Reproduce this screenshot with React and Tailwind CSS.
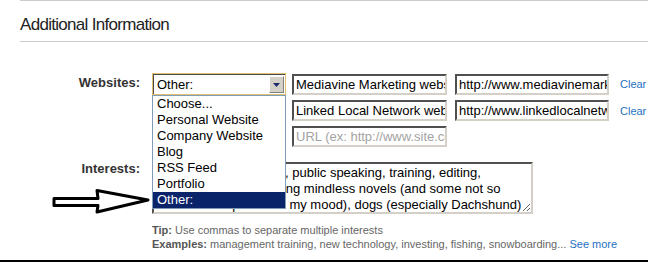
import { useState } from "react"

const websiteTypes = ['Choose...', 'Personal Website', 'Company Website', 'Blog', 'RSS Feed', 'Portfolio', 'Other:']

const websites = [
    { title: 'Mediavine Marketing website', url: 'http://www.mediavinemarketing.com' },
    { title: 'Linked Local Network website', url: 'http://www.linkedlocalnetwork.com' },
]

const interests = "Blogging, social media, public speaking, training, editing,\nsales, marketing, reading mindless novels (and some not so\nmindless - depends on my mood), dogs (especially Dachshund)"

const inset = "border-2 border-t-[#505050] border-l-[#505050] border-r-[#d4d0c8] border-b-[#d4d0c8]"

function TextBox({ value, placeholder, className }) {
    return (
        <input
            readOnly
            value={value}
            placeholder={placeholder}
            className={`${inset} ${className} block shrink-0 h-[21px] pl-[2px] pr-0 py-0 text-[13px] text-black placeholder:text-[#a3a3a3] bg-white outline-none font-['Liberation_Sans',Arial,sans-serif]`}
        />
    )
}

function TypeSelect({ open }) {
    const selected = 'Other:'
    return (
        <div className="relative w-[134px] h-[22px] shrink-0">
            <div className="h-full border border-[#e3c06f] bg-white">
                <div className="h-full flex items-center border-t border-l border-[#4a4a4a] pl-[3px]">
                    <span className="flex-1 text-[13px] text-black leading-[16px]">{selected}</span>
                    <div className="w-[15px] h-[17px] mr-[1px] bg-[#d4d0c8] border border-t-white border-l-white border-r-[#808080] border-b-[#808080] flex items-center justify-center">
                        <svg width="7" height="4" viewBox="0 0 7 4"><path d="M0 0h7L3.5 4z" fill="#1d2a6e" /></svg>
                    </div>
                </div>
            </div>
            {open && (
                <ul className="absolute left-0 top-full w-[134px] bg-white border border-[#7f9db9] z-10">
                    {websiteTypes.map(t => (
                        <li
                            key={t}
                            className={`h-[16px] leading-[16px] pl-[4px] text-[13px] ${t === selected ? 'bg-[#0a246a] text-white' : 'text-black'}`}
                        >
                            {t}
                        </li>
                    ))}
                </ul>
            )}
        </div>
    )
}

export default function App() {
    const [open] = useState(true)

    return (
        <div className="relative w-[648px] h-[262px] bg-white overflow-hidden flex flex-col font-['Liberation_Sans',Arial,sans-serif]">
            <div className="ml-5 border-t border-b border-[#cccccc] pt-[14px] pb-[6px]">
                <h2 className="text-[17px] leading-[20px] tracking-[-0.7px] text-[#222]">Additional Information</h2>
            </div>

            <div className="grid grid-cols-[140px_1fr] gap-x-3 mt-[31px]">
                <div className="text-right text-[13px] leading-[16px] font-bold text-[#333] pt-[2px]">Websites:</div>
                <div className="flex flex-col gap-[5px]">
                    <div className="flex items-start h-[22px]">
                        <TypeSelect open={open} />
                        <TextBox value={websites[0].title} className="ml-[6px] mt-[1px] w-[155px]" />
                        <TextBox value={websites[0].url} className="ml-[8px] mt-[1px] w-[154px]" />
                        <a className="ml-[11px] mt-[4px] text-[11px] leading-[14px] text-[#1f6fbf] cursor-pointer">Clear</a>
                    </div>
                    <div className="flex items-center h-[21px] pl-[140px]">
                        <TextBox value={websites[1].title} className="w-[155px]" />
                        <TextBox value={websites[1].url} className="ml-[8px] w-[154px]" />
                        <a className="ml-[11px] text-[11px] leading-[14px] text-[#1f6fbf] cursor-pointer">Clear</a>
                    </div>
                    <div className="flex items-center h-[21px] pl-[140px]">
                        <TextBox value="" placeholder="URL (ex: http://www.site.com)" className="w-[155px]" />
                    </div>
                </div>

                <div className="text-right text-[13px] leading-[16px] font-bold text-[#333] mt-[14px]">Interests:</div>
                <div className="mt-[15px]">
                    <textarea
                        readOnly
                        value={interests}
                        className={`${inset} block w-[381px] h-[52px] pl-[1px] pt-[1px] pb-0 pr-0 text-[13px] leading-[16px] text-black bg-white outline-none overflow-hidden whitespace-pre font-['Liberation_Sans',Arial,sans-serif]`}
                    />
                    <div className="mt-[9px] text-[11px] leading-[14px] text-[#666]">
                        <p><b className="text-[#555]">Tip:</b> Use commas to separate multiple interests</p>
                        <p><b className="text-[#555]">Examples:</b> management training, new technology, investing, fishing, snowboarding... <a className="text-[#1f6fbf] cursor-pointer">See more</a></p>
                    </div>
                </div>
            </div>

            <div className="mt-auto h-[2px] bg-black" />

            <svg className="absolute left-[46px] top-[186px] z-20" width="108" height="30" viewBox="46 186 108 30">
                <polygon
                    points="54,198.5 98,198.5 97,190.5 148,200 97,212 98,205.5 54,205.5"
                    fill="white"
                    stroke="black"
                    strokeWidth="3"
                    strokeLinejoin="round"
                />
            </svg>
        </div>
    )
}
